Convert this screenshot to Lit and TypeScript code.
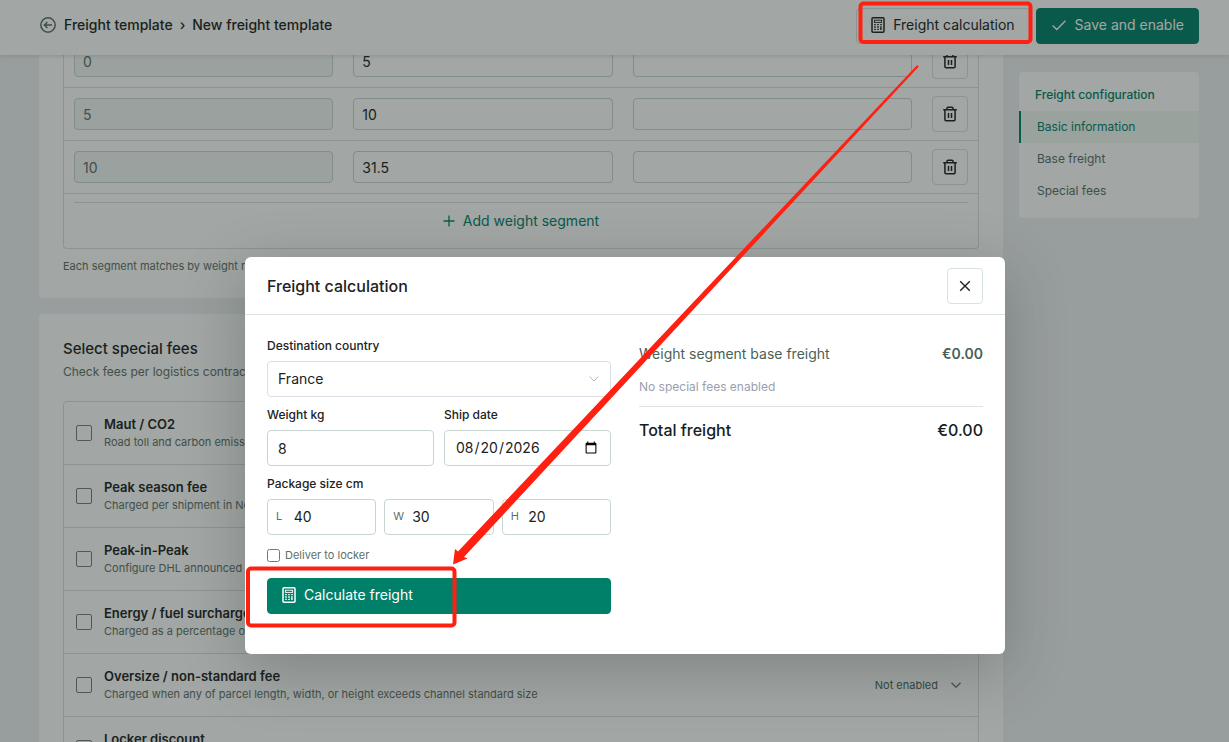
import { LitElement, html, css, svg } from "lit";
import { customElement, state } from "lit/decorators.js";

const calculatorIcon = html`<svg class="icon" width="14" height="16" viewBox="0 0 14 16" aria-hidden="true">
  <rect x="1" y="0.8" width="12" height="14.4" rx="1" fill="none" stroke="currentColor" stroke-width="1.5" />
  <rect x="3.4" y="3.2" width="7.2" height="2.2" fill="none" stroke="currentColor" stroke-width="0.9" />
  <path d="M3.2 7.6h1.6M6.2 7.6h1.6M3.2 10h1.6M6.2 10h1.6M3.2 12.4h1.6M6.2 12.4h1.6M9.2 7.6h1.6M9.9 9.3v3.7" stroke="currentColor" stroke-width="1.4" fill="none" />
</svg>`;

const trashIcon = html`<svg width="16" height="16" viewBox="0 0 16 16" fill="none" stroke="currentColor" stroke-width="1.5" aria-hidden="true">
  <path d="M1.2 3.8h13.6M5 3.6V2.2q0-1 1-1h4q1 0 1 1v1.4M2.9 4v9.6q0 1.2 1.2 1.2h7.8q1.2 0 1.2-1.2V4M6.5 7v5M9.5 7v5" />
</svg>`;

const chevronIcon = html`<svg width="12" height="12" viewBox="0 0 12 12" fill="none" stroke="currentColor" stroke-width="1.5" aria-hidden="true">
  <path d="M1.5 3.8 6 8.2l4.5-4.4" />
</svg>`;

interface Segment { from: string; to: string; price: string; }
interface Fee { id: string; name: string; note: string; }

@customElement("app-root")
export class AppRoot extends LitElement {
  @state() private segments: Segment[] = [
    { from: "0", to: "5", price: "" },
    { from: "5", to: "10", price: "" },
    { from: "10", to: "31.5", price: "" },
  ];

  private fees: Fee[] = [
    { id: "maut", name: "Maut / CO2", note: "Road toll and carbon emission fee" },
    { id: "peak", name: "Peak season fee", note: "Charged per shipment in Nov and Dec" },
    { id: "pip", name: "Peak-in-Peak", note: "Configure DHL announced fees" },
    { id: "fuel", name: "Energy / fuel surcharge", note: "Charged as a percentage of freight" },
    { id: "oversize", name: "Oversize / non-standard fee", note: "Charged when any of parcel length, width, or height exceeds channel standard size" },
    { id: "locker", name: "Locker discount", note: "Reduced rate for locker delivery" },
  ];

  static styles = css`
    :host {
      display: block;
      position: relative;
      height: 100vh;
      overflow: hidden;
      background: #eef2f4;
      color: #202223;
      font-family: Inter, "Liberation Sans", sans-serif;
      font-size: 14px;
      line-height: 20px;
    }
    * { box-sizing: border-box; }
    h1, h2, h3, p { margin: 0; }
    button, input, select { font: inherit; color: inherit; margin: 0; }
    button { cursor: pointer; }
    svg { flex: none; display: block; }

    .topbar {
      position: absolute;
      inset: 0 0 auto 0;
      display: flex;
      align-items: center;
      justify-content: space-between;
      padding: 8px 30px 11px 40px;
      background: #fff;
      box-shadow: 0 1px 4px rgba(20, 40, 35, 0.15);
      z-index: 1;
    }
    .crumbs { display: flex; align-items: center; gap: 8px; padding-bottom: 2px; font-weight: 500; color: #1a2421; }
    .trail { display: flex; gap: 7px; }
    .crumbs a { color: inherit; text-decoration: none; }
    .back { color: #5c6f69; }
    .actions { display: flex; gap: 6px; }
    .btn {
      display: flex;
      align-items: center;
      gap: 8px;
      height: 36px;
      padding: 0 14px 2px;
      border: 1px solid #d8e2df;
      border-radius: 4px;
      background: #fff;
    }
    .primary { background: #008069; border-color: #008069; color: #fff; }

    .page {
      display: grid;
      grid-template-columns: minmax(0, 1fr) 180px;
      gap: 16px;
      align-items: start;
      padding: 35px 30px 0 39px;
    }
    .column { display: flex; flex-direction: column; gap: 16px; }
    .card { background: #fff; border-radius: 4px; padding: 24px; }
    .card.first { padding-top: 0; }
    .segments { border: 1px solid #d8e2df; border-top: 0; border-radius: 0 0 4px 4px; }
    .segment {
      display: grid;
      grid-template-columns: 14fr 14fr 15fr 56px;
      align-items: center;
      border-bottom: 1px solid #d8e2df;
      padding: 8px 0;
    }
    .cell { padding: 0 10px; display: flex; }
    .field {
      width: 100%;
      min-width: 0;
      height: 36px;
      padding: 0 10px;
      border: 1px solid #c8d6d2;
      border-radius: 4px;
      background: #fff;
      outline: 0;
    }
    .segment .field { height: 32px; padding: 0 8px; }
    .segment .field:disabled { background: #f3f7f5; color: #5c6f69; }
    .square {
      display: grid;
      place-items: center;
      width: 36px;
      height: 36px;
      padding: 0;
      border: 1px solid #d8e2df;
      border-radius: 4px;
      background: #fff;
    }
    .add { padding: 8px 10px; }
    .add button {
      display: flex;
      align-items: center;
      justify-content: center;
      gap: 8px;
      width: 100%;
      height: 38px;
      padding: 0 0 2px;
      border: 0;
      border-top: 1px solid #d8e2df;
      background: none;
      color: #008069;
    }
    .note { font-size: 11px; line-height: 16px; color: #5c7069; }
    .first .note { margin-top: 9px; }

    h2 { font-size: 15px; line-height: 22px; font-weight: 500; }
    .lead { font-size: 12px; line-height: 20px; color: #5c7069; margin-top: 2px; }
    .fees { margin-top: 19px; border: 1px solid #d8e2df; border-radius: 4px; }
    .fee {
      display: grid;
      grid-template-columns: auto minmax(0, 1fr) auto auto;
      gap: 12px;
      align-items: center;
      height: 63px;
      padding: 0 16px 0 12px;
      border-bottom: 1px solid #d8e2df;
    }
    .what { padding-bottom: 2px; }
    .fee label { display: block; font-size: 13px; font-weight: 600; }
    .check {
      appearance: none;
      width: 16px;
      height: 16px;
      border: 1px solid #76807d;
      border-radius: 2px;
      background: #fff;
    }
    .check:checked { background: #008069; }
    .fee .state { font-size: 11px; color: #4a5f57; }
    .fee svg { color: #6f837c; }

    .toc { background: #fff; border-radius: 4px; padding: 13px 0 11px; margin-top: 37px; font-size: 12px; }
    .toc h3 { padding: 0 16px; font-size: 12px; line-height: 20px; font-weight: 500; color: #008069; margin-bottom: 6px; }
    .toc a {
      display: block;
      line-height: 32px;
      padding: 0 16px;
      border-left: 2px solid transparent;
      color: #5c6f69;
      text-decoration: none;
    }
    .toc a.active { border-color: #008069; background: #f1f8f2; color: #008069; }

    .overlay {
      position: absolute;
      inset: 0;
      display: flex;
      justify-content: center;
      align-items: flex-start;
      padding: 257px 0 0 21px;
      background: rgba(22, 32, 28, 0.4);
      z-index: 2;
    }
    .modal {
      width: 100%;
      max-width: 760px;
      background: #fff;
      border-radius: 6px;
      box-shadow: 0 16px 60px rgba(20, 36, 30, 0.25);
    }
    .modal header {
      display: flex;
      align-items: center;
      justify-content: space-between;
      height: 58px;
      padding: 0 22px;
      border-bottom: 1px solid #dbe4e2;
    }
    .modal h2 { font-size: 16px; }
    .body {
      display: grid;
      grid-template-columns: 1fr 1fr;
      gap: 28px;
      padding: 22px 22px 40px;
    }
    .form { display: flex; flex-direction: column; gap: 9px; }
    .group { display: flex; flex-direction: column; gap: 6px; min-width: 0; }
    .group > label, .caption { font-size: 12px; line-height: 18px; font-weight: 500; }
    .pair { display: grid; grid-template-columns: 1fr 1fr; gap: 10px; }
    .triple { display: grid; grid-template-columns: 1fr 1fr 1fr; gap: 8px; }
    .selectbox { display: grid; align-items: center; }
    .selectbox > * { grid-area: 1 / 1; }
    .selectbox select { appearance: none; border-color: #dcdfe6; }
    .selectbox svg { justify-self: end; margin-right: 11px; color: #b4bac2; pointer-events: none; }
    .dim {
      display: flex;
      align-items: center;
      gap: 8px;
      height: 36px;
      padding: 0 8px;
      border: 1px solid #c8d6d2;
      border-radius: 4px;
    }
    .dim label { width: 12px; padding-bottom: 2px; font-size: 11px; color: #5c6f69; }
    .dim input { width: 100%; min-width: 0; border: 0; outline: 0; padding: 0; background: none; }
    .locker { display: flex; align-items: center; gap: 5px; margin-top: 3px; font-size: 11px; line-height: 16px; color: #5c6f69; }
    .locker input { width: 13px; height: 13px; }
    .form .btn { margin-top: 6px; }
    .result { display: flex; flex-direction: column; }
    .line { display: flex; justify-content: space-between; color: #4a5f57; padding-top: 7px; }
    .line b { font-weight: 600; }
    .none { font-size: 12px; line-height: 18px; color: #9a9fae; margin-top: 14px; padding-bottom: 10px; border-bottom: 1px solid #dbe4e2; }
    .total { display: flex; justify-content: space-between; margin-top: 11px; font-size: 16px; line-height: 24px; font-weight: 500; color: #14211d; }

    .marks { position: absolute; top: 0; left: 0; z-index: 3; pointer-events: none; }
  `;

  private addSegment() {
    this.segments = [...this.segments, { from: "", to: "", price: "" }];
  }

  private removeSegment(index: number) {
    this.segments = this.segments.filter((_, i) => i !== index);
  }

  private renderSegment(s: Segment, i: number) {
    return html`<div class="segment">
      <div class="cell"><input class="field" aria-label="From weight" disabled .value=${s.from} /></div>
      <div class="cell"><input class="field" aria-label="To weight" .value=${s.to} /></div>
      <div class="cell"><input class="field" aria-label="Price" .value=${s.price} /></div>
      <div class="cell">
        <button class="square" aria-label="Delete segment" @click=${() => this.removeSegment(i)}>${trashIcon}</button>
      </div>
    </div>`;
  }

  private renderFee(f: Fee) {
    return html`<div class="fee">
      <input class="check" type="checkbox" id=${f.id} />
      <div class="what">
        <label for=${f.id}>${f.name}</label>
        <p class="note">${f.note}</p>
      </div>
      <span class="state">Not enabled</span>
      ${chevronIcon}
    </div>`;
  }

  private renderDimension(id: string, letter: string, value: string) {
    return html`<div class="dim">
      <label for=${id}>${letter}</label>
      <input id=${id} .value=${value} />
    </div>`;
  }

  private renderMarks() {
    return svg`<svg class="marks" width="1040" height="640" viewBox="0 0 1040 640" aria-hidden="true">
      <g fill="none" stroke="#ff2012" stroke-width="4">
        <rect x="860.5" y="3.5" width="170" height="38.5" rx="3" />
        <rect x="248" y="568.5" width="206.5" height="57" rx="3" />
      </g>
      <path fill="#ff2012" d="M917 65.2 919 66.2 464 557 467.5 558.5 453 564.5 455 549 458 551.5Z" />
    </svg>`;
  }

  render() {
    return html`
      <header class="topbar">
        <nav class="crumbs">
          <svg class="back" width="16" height="16" viewBox="0 0 16 16" fill="none" stroke="currentColor" stroke-width="1.5" aria-hidden="true">
            <circle cx="8" cy="8" r="7.2" />
            <path d="M12 8H4.6M7.4 5 4.4 8l3 3" />
          </svg>
          <div class="trail">
            <a href="#templates">Freight template</a><span>›</span><span>New freight template</span>
          </div>
        </nav>
        <div class="actions">
          <button class="btn">${calculatorIcon}Freight calculation</button>
          <button class="btn primary">
            <svg width="16" height="16" viewBox="0 0 16 16" fill="none" stroke="currentColor" stroke-width="1.4" aria-hidden="true">
              <path d="M1.6 8.4 5.8 12.4 14.4 3.8" />
            </svg>
            Save and enable
          </button>
        </div>
      </header>

      <main class="page">
        <div class="column">
          <section class="card first">
            <div class="segments">
              ${this.segments.map((s, i) => this.renderSegment(s, i))}
              <div class="add">
                <button @click=${this.addSegment}>
                  <svg width="12" height="12" viewBox="0 0 12 12" stroke="currentColor" stroke-width="1.3" aria-hidden="true">
                    <path d="M6 .5v11M.5 6h11" />
                  </svg>
                  Add weight segment
                </button>
              </div>
            </div>
            <p class="note">Each segment matches by weight range</p>
          </section>
          <section class="card">
            <h2>Select special fees</h2>
            <p class="lead">Check fees per logistics contract</p>
            <div class="fees">${this.fees.map((f) => this.renderFee(f))}</div>
          </section>
        </div>
        <nav class="toc">
          <h3>Freight configuration</h3>
          <a class="active" href="#basic">Basic information</a>
          <a href="#base">Base freight</a>
          <a href="#special">Special fees</a>
        </nav>
      </main>

      <div class="overlay">
        <div class="modal" role="dialog" aria-labelledby="dialog-title">
          <header>
            <h2 id="dialog-title">Freight calculation</h2>
            <button class="square" aria-label="Close">
              <svg width="12" height="12" viewBox="0 0 12 12" stroke="currentColor" stroke-width="1.4" aria-hidden="true">
                <path d="M1.2 1.2l9.6 9.6M10.8 1.2 1.2 10.8" />
              </svg>
            </button>
          </header>
          <div class="body">
            <div class="form">
              <div class="group">
                <label for="country">Destination country</label>
                <div class="selectbox">
                  <select class="field" id="country"><option>France</option></select>
                  <svg width="12" height="12" viewBox="0 0 12 12" fill="none" stroke="currentColor" aria-hidden="true">
                    <path d="M1.5 3.5 6 8l4.5-4.5" />
                  </svg>
                </div>
              </div>
              <div class="pair">
                <div class="group">
                  <label for="weight">Weight kg</label>
                  <input class="field" id="weight" value="8" />
                </div>
                <div class="group">
                  <label for="date">Ship date</label>
                  <input class="field" id="date" type="date" value="2026-08-20" />
                </div>
              </div>
              <div class="group">
                <span class="caption">Package size cm</span>
                <div class="triple">
                  ${this.renderDimension("length", "L", "40")}
                  ${this.renderDimension("width", "W", "30")}
                  ${this.renderDimension("height", "H", "20")}
                </div>
              </div>
              <label class="locker"><input type="checkbox" />Deliver to locker</label>
              <button class="btn primary">${calculatorIcon}Calculate freight</button>
            </div>
            <div class="result">
              <div class="line"><span>Weight segment base freight</span><b>€0.00</b></div>
              <p class="none">No special fees enabled</p>
              <div class="total"><span>Total freight</span><span>€0.00</span></div>
            </div>
          </div>
        </div>
      </div>
      ${this.renderMarks()}
    `;
  }
}
